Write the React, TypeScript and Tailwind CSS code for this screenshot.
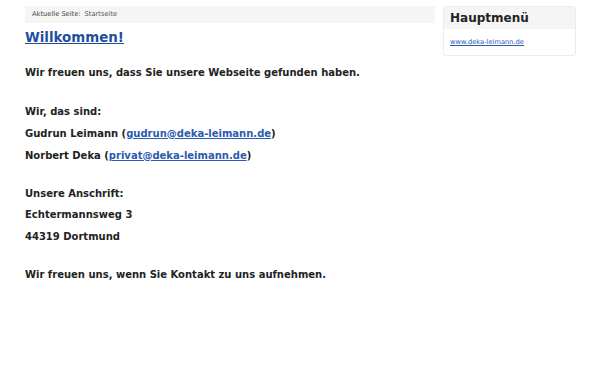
export default function App() {
  const font = { fontFamily: '"DejaVu Sans", sans-serif' };
  return (
    <div className="w-[600px] h-[375px] bg-white text-[#222]" style={font}>
      <div className="flex gap-2 pt-[6px] pl-[25px]">
        {/* Main column */}
        <div className="w-[410px]">
          <div className="h-[17px] bg-[#f5f5f5] flex items-center pl-[7px] text-[6.7px] text-[#444]">
            <span>Aktuelle Seite:</span>
            <span className="ml-[4px] text-[#555]">Startseite</span>
          </div>
          <h1 className="mt-[7px] text-[13.4px] leading-[16px] font-bold">
            <a href="#" className="text-[#1f4e9c] underline">Willkommen!</a>
          </h1>
          <div className="mt-[20px] text-[10px] leading-[14px] font-bold text-[#222]">
            <p>Wir freuen uns, dass Sie unsere Webseite gefunden haben.</p>
            <p className="mt-[25px]">Wir, das sind:</p>
            <p className="mt-[7.5px]">
              Gudrun Leimann (<a href="#" className="text-[#2a5bb0] underline">gudrun@deka-leimann.de</a>)
            </p>
            <p className="mt-[8px]">
              Norbert Deka (<a href="#" className="text-[#2a5bb0] underline">privat@deka-leimann.de</a>)
            </p>
            <p className="mt-[24px]">Unsere Anschrift:</p>
            <p className="mt-[7.5px]">Echtermannsweg 3</p>
            <p className="mt-[8px]">44319 Dortmund</p>
            <p className="mt-[24px]">Wir freuen uns, wenn Sie Kontakt zu uns aufnehmen.</p>
          </div>
        </div>
        {/* Sidebar */}
        <div className="w-[133px] h-[50px] border border-[#ececec] rounded-[3px] overflow-hidden">
          <div className="h-[22px] bg-[#f5f5f5] flex items-center pl-[6px] text-[12px] font-bold text-[#222]">
            Hauptmenü
          </div>
          <div className="pl-[6px] pt-[8px] text-[6.7px]">
            <a href="#" className="text-[#2a5bb0] underline">www.deka-leimann.de</a>
          </div>
        </div>
      </div>
    </div>
  );
}
